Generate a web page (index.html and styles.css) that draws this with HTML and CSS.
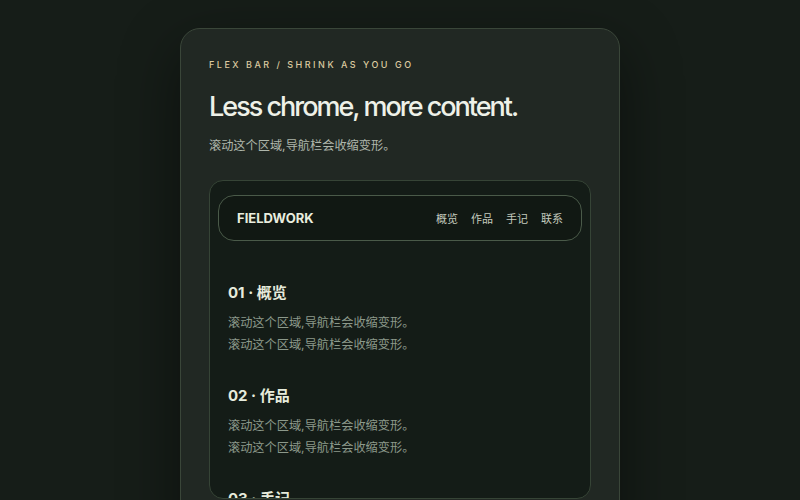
FILE: index.html
```html
<!DOCTYPE html>
<html lang="en">
<head>
    <meta charset="UTF-8">
    <meta name="viewport" content="width=device-width, initial-scale=1.0">
    <title>Flex Bar</title>
    <link rel="stylesheet" href="styles.css">
</head>
<body>

    <div class="card">
        <p class="eyebrow">FLEX BAR / SHRINK AS YOU GO</p>
        <h1>Less chrome, more content.</h1>
        <p class="lead">滚动这个区域,导航栏会收缩变形。</p>

        <div class="scroller">
            <nav class="bar">
                <span class="brand">FIELDWORK</span>
                <div class="links">
                    <a href="#s1">概览</a>
                    <a href="#s2">作品</a>
                    <a href="#s3">手记</a>
                    <a href="#s4">联系</a>
                </div>
            </nav>

            <div class="content">
                <section id="s1">
                    <h3>01 · 概览</h3>
                    <p>滚动这个区域,导航栏会收缩变形。</p>
                    <p>滚动这个区域,导航栏会收缩变形。</p>
                </section>
                <section id="s2">
                    <h3>02 · 作品</h3>
                    <p>滚动这个区域,导航栏会收缩变形。</p>
                    <p>滚动这个区域,导航栏会收缩变形。</p>
                </section>
                <section id="s3">
                    <h3>03 · 手记</h3>
                    <p>滚动这个区域,导航栏会收缩变形。</p>
                    <p>滚动这个区域,导航栏会收缩变形。</p>
                </section>
                <section id="s4">
                    <h3>04 · 联系</h3>
                    <p>滚动这个区域,导航栏会收缩变形。</p>
                    <p>滚动这个区域,导航栏会收缩变形。</p>
                </section>
            </div>
        </div>
    </div>

</body>
</html>
```

FILE: styles.css
```css
body {
    margin: 0;
    height: 100vh;
    overflow: hidden;
    background: #161d18;
    font-family: Inter, "Noto Sans CJK SC", sans-serif;
    color: #e8ecdf;
    display: flex;
    justify-content: center;
}

.card {
    width: 440px;
    margin-top: 28px;
    padding: 29px 28px 0;
    box-sizing: border-box;
    background: #212823;
    border: 1px solid #3a4639;
    border-radius: 20px;
    box-shadow: 0 20px 60px rgba(0, 0, 0, 0.45);
    height: 520px;
}

.eyebrow {
    margin: 0;
    font-size: 9px;
    font-weight: 500;
    letter-spacing: 2.5px;
    color: #dccaa0;
    line-height: 14px;
}

h1 {
    margin: 17px 0 0;
    font-size: 27px;
    font-weight: 500;
    letter-spacing: -2px;
    line-height: 36px;
    color: #eef1e8;
}

.lead {
    margin: 12px 0 0;
    font-size: 12.2px;
    line-height: 18px;
    color: #aeb6ab;
}

.scroller {
    margin-top: 25px;
    height: 319px;
    box-sizing: border-box;
    overflow: hidden;
    background: #141c17;
    border: 1px solid #364436;
    border-radius: 14px;
    padding: 14px 8px 0;
}

.bar {
    display: flex;
    align-items: center;
    justify-content: space-between;
    height: 46px;
    box-sizing: border-box;
    padding: 0 18px;
    background: #111813;
    border: 1px solid #4a5a49;
    border-radius: 16px;
}

.brand {
    font-size: 13px;
    font-weight: 700;
    letter-spacing: 0;
    color: #e9eddf;
}

.links {
    display: flex;
    gap: 13px;
}

.links a {
    font-size: 11px;
    color: #c3cabd;
    text-decoration: none;
}

.content {
    padding: 42px 10px 0;
}

section {
    padding-bottom: 30px;
}

h3 {
    margin: 0 0 9px;
    font-size: 15px;
    font-weight: 700;
    line-height: 20px;
    color: #e6ebdc;
}

section p {
    margin: 0;
    font-size: 12.2px;
    line-height: 22px;
    color: #8c998b;
}
```
